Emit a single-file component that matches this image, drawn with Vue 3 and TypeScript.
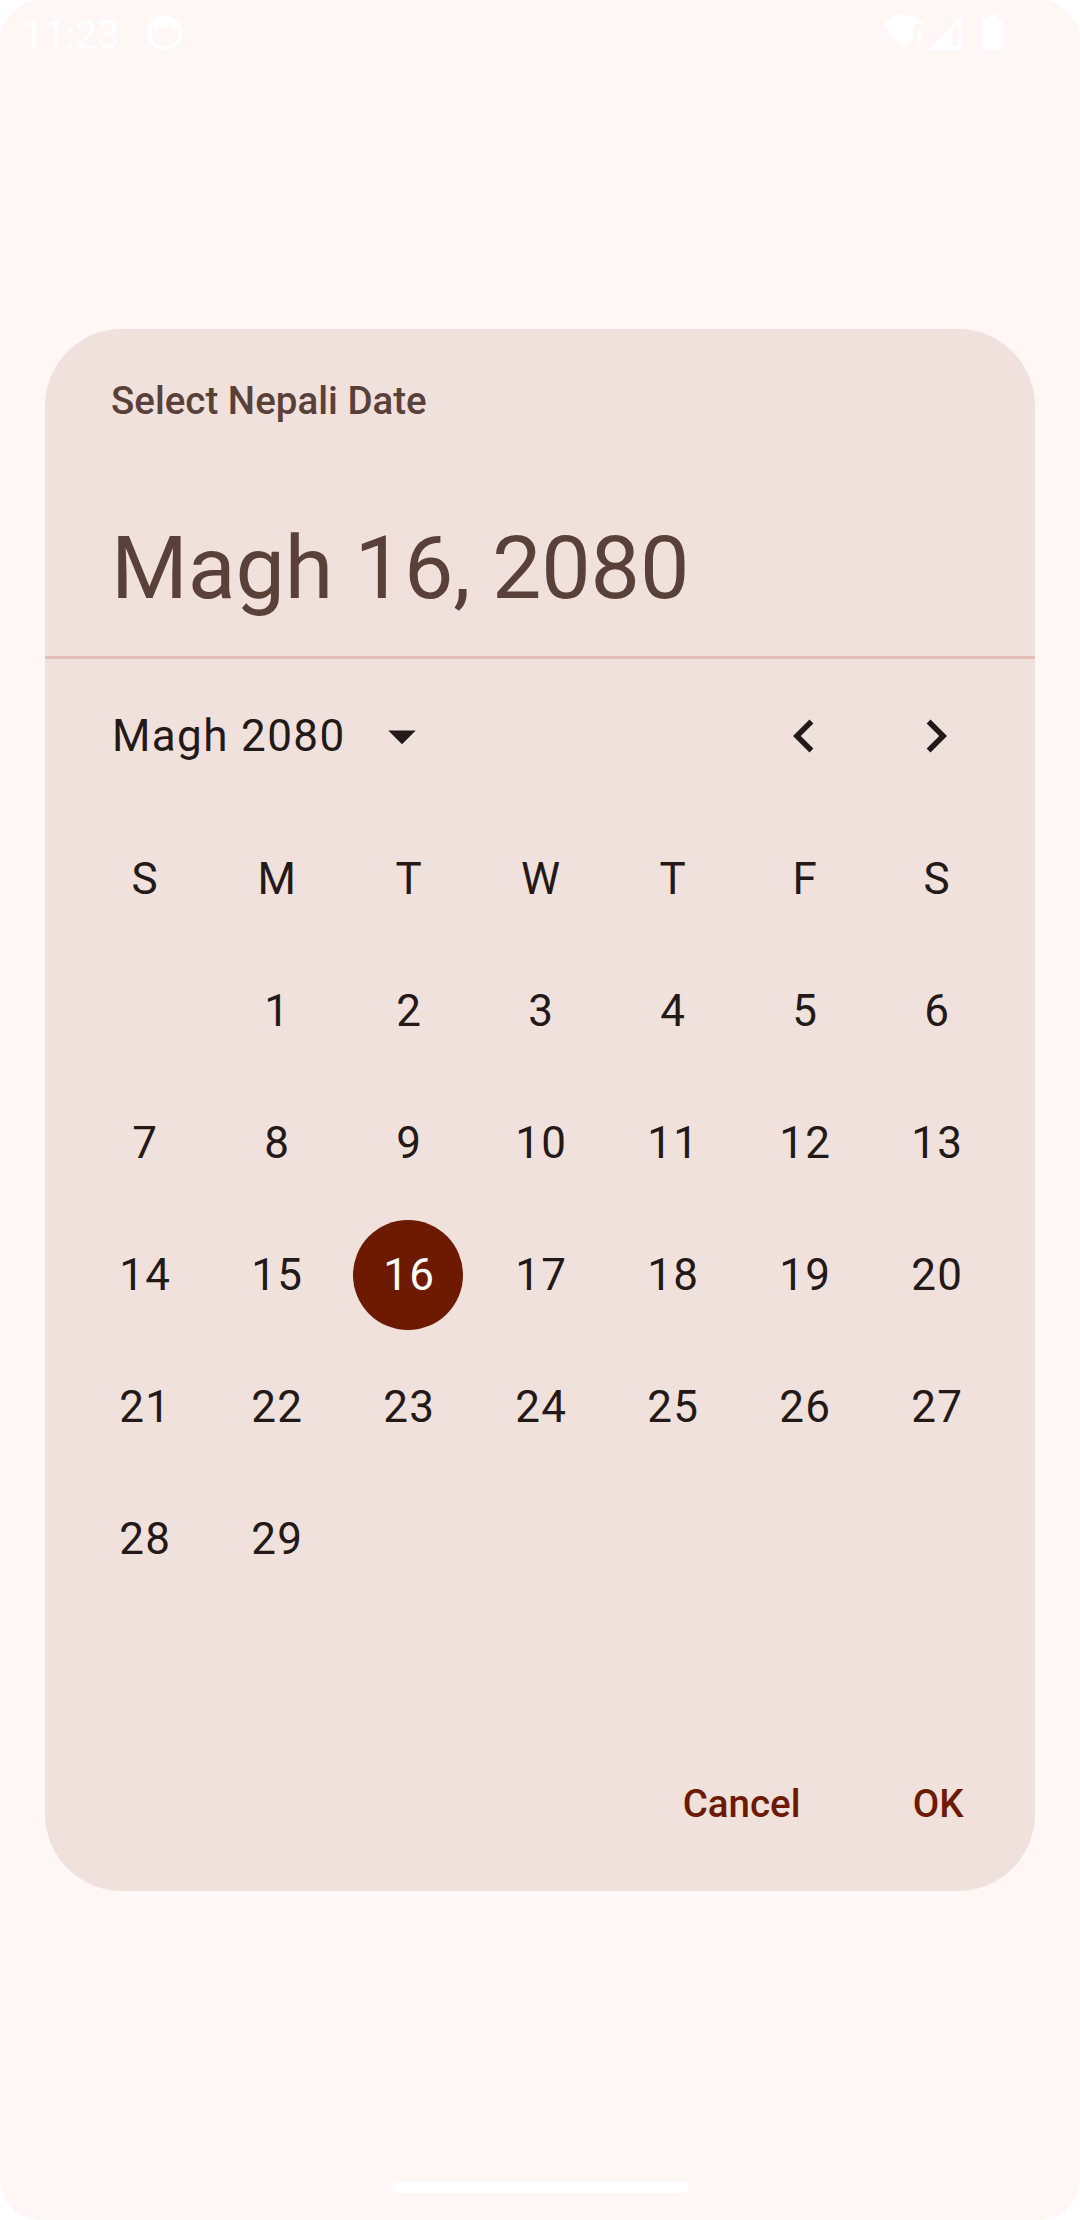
<script setup lang="ts">
const weekdays: string[] = ['S', 'M', 'T', 'W', 'T', 'F', 'S']
const firstWeekday = 1
const daysInMonth = 29
const selectedDay = 16

const cells: (number | null)[] = Array.from({ length: 35 }, (_, i) => {
  const day = i - firstWeekday + 1
  return day >= 1 && day <= daysInMonth ? day : null
})
</script>

<template>
  <div class="screen">
    <header class="status">
      <span class="clock">11:23</span>
      <svg class="face" viewBox="0 0 108 108">
        <circle cx="54" cy="54" r="46.5" fill="none" stroke="#fff" stroke-width="11" />
        <path d="M13 34Q25 5 54 4Q83 5 95 34L86 30L87 46L81 49L76 34Q54 42 35 34L29 49L23 46L26 32Z" fill="#fff" />
        <g fill="#fff" opacity=".6">
          <circle cx="41" cy="54" r="2.5" /><circle cx="67" cy="52" r="3" />
          <circle cx="31" cy="66" r="4" /><circle cx="79" cy="72" r="3" />
          <path d="M40 73Q54 84 67 70L65 78Q53 87 40 73Z" />
        </g>
      </svg>
      <svg class="signals" viewBox="0 0 370 110" fill="#fff">
        <path d="M1 29Q28 2 62 2T123 29H94V70L62 105Z" />
        <rect x="103" y="44" width="11" height="43" rx="5" />
        <rect x="103" y="95" width="11" height="12" rx="4" />
        <path fill-rule="evenodd" d="M136 107L237 4V107ZM205 51V95H226V29Z" />
        <path d="M316 2H343V13H355Q361 13 361 19V101Q361 107 355 107H304Q298 107 298 101V19Q298 13 304 13H316Z" />
      </svg>
    </header>

    <main class="dialog">
      <section class="headline">
        <div class="label">Select Nepali Date</div>
        <div class="date">Magh 16, 2080</div>
      </section>
      <div class="divider"></div>
      <nav class="month">
        <span class="month-name">Magh 2080</span>
        <svg class="icon" viewBox="0 0 24 24"><path d="M7 10l5 5 5-5z" /></svg>
        <div class="arrows">
          <button class="arrow" aria-label="Previous month">
            <svg class="icon" viewBox="0 0 24 24"><path d="M15.41 16.59L10.83 12l4.58-4.59L14 6l-6 6 6 6z" /></svg>
          </button>
          <button class="arrow" aria-label="Next month">
            <svg class="icon" viewBox="0 0 24 24"><path d="M8.59 16.59L13.17 12 8.59 7.41 10 6l6 6-6 6z" /></svg>
          </button>
        </div>
      </nav>
      <section class="calendar">
        <div v-for="(name, i) in weekdays" :key="'w' + i" class="cell">
          <span class="day">{{ name }}</span>
        </div>
        <div v-for="(day, i) in cells" :key="i" class="cell">
          <span class="day" :class="{ selected: day === selectedDay }">{{ day ?? '' }}</span>
        </div>
      </section>
      <footer class="actions">
        <button class="action">Cancel</button>
        <button class="action">OK</button>
      </footer>
    </main>

    <div class="home"></div>
  </div>
</template>

<style>
body {
  margin: 0;
  background: #fff;
}
</style>

<style scoped>
.screen {
  box-sizing: border-box;
  width: 1080px;
  height: 2220px;
  border-radius: 41px;
  overflow: hidden;
  background: #fff7f5;
  color: #231917;
  font-family: Roboto, "Noto Sans", sans-serif;
  display: flex;
  flex-direction: column;
  align-items: center;
}
.status {
  box-sizing: border-box;
  width: 100%;
  height: 329px;
  flex: none;
  display: flex;
  align-items: flex-start;
  padding: 15px 77px 0 22px;
}
.clock {
  width: 125px;
  font-size: 39px;
  line-height: 41px;
  color: #fff;
}
.face {
  width: 36px;
  height: 36px;
}
.signals {
  width: 123.33px;
  height: 36.67px;
  margin-left: auto;
  margin-right: -3px;
  margin-top: -0.67px;
}
.dialog {
  width: 990px;
  height: 1562px;
  flex: none;
  border-radius: 77px;
  background: #f0e1dd;
  display: flex;
  flex-direction: column;
}
.headline {
  box-sizing: border-box;
  height: 327px;
  padding: 44px 66px 33px;
  display: flex;
  flex-direction: column;
  justify-content: space-between;
  color: #59413a;
}
.label {
  font-size: 38.5px;
  line-height: 55px;
  font-weight: 500;
}
.date {
  font-size: 88px;
  line-height: 110px;
  letter-spacing: -0.16px;
}
.divider {
  height: 3px;
  background: #e1bfb6;
}
.month {
  height: 154px;
  padding: 0 33px 0 67px;
  display: flex;
  align-items: center;
}
.month-name {
  width: 257px;
  font-size: 44px;
  line-height: 66px;
  letter-spacing: 1.375px;
  white-space: nowrap;
}
.icon {
  display: block;
  width: 66px;
  height: 66px;
  fill: #231917;
}
.arrows {
  display: flex;
  margin-left: auto;
}
.arrow {
  width: 132px;
  height: 132px;
  padding: 0;
  border: 0;
  background: none;
  display: flex;
  align-items: center;
  justify-content: center;
}
.calendar {
  display: grid;
  grid-template-columns: repeat(7, 132px);
  grid-auto-rows: 132px;
  margin: 0 33px;
  font-size: 44px;
  letter-spacing: 1.375px;
}
.cell {
  display: flex;
  align-items: center;
  justify-content: center;
}
.day {
  width: 110px;
  height: 110px;
  border-radius: 50%;
  line-height: 110px;
  text-align: center;
  text-indent: 2.6px;
}
.selected {
  background: #6e1a00;
  color: #fff;
}
.actions {
  display: flex;
  justify-content: flex-end;
  gap: 25px;
  margin: auto 17px 22px 0;
}
.action {
  height: 132px;
  min-width: 159.5px;
  padding: 0 33px;
  border: 0;
  background: none;
  color: #6e1a00;
  font: 500 38.5px/55px Roboto, "Noto Sans", sans-serif;
}
.home {
  width: 297px;
  height: 11px;
  margin-top: 290.5px;
  flex: none;
  border-radius: 6px;
  background: #fff;
}
</style>
